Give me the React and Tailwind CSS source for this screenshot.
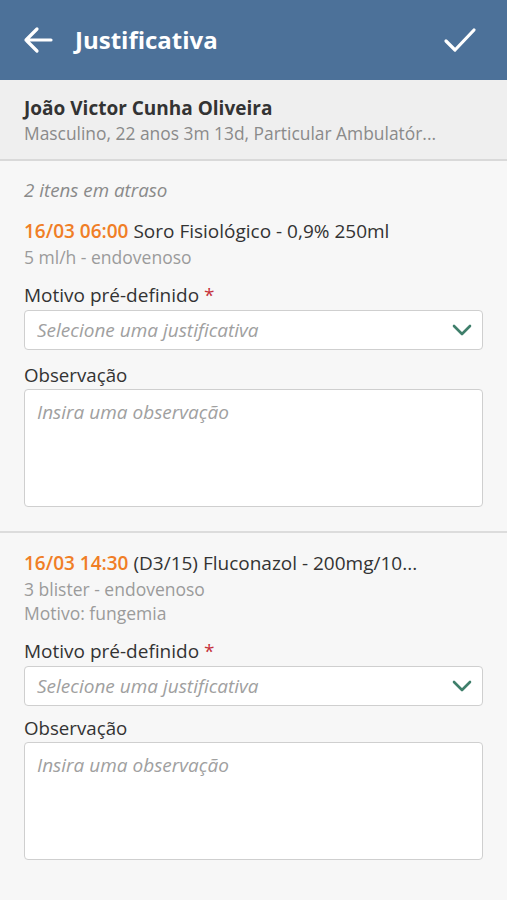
import React from "react";

function Chevron() {
  return (
    <svg width="20" height="14" viewBox="0 0 20 14" fill="none">
      <path d="M2 3 L10 11 L18 3" stroke="#3f7f6b" strokeWidth="2.6" strokeLinecap="round" strokeLinejoin="round" />
    </svg>
  );
}

function Item({ time, title, subs, first }) {
  return (
    <div className={`px-6 ${first ? "pb-6" : "pt-[18px] pb-6"}`}>
      <div className="text-[19px] leading-6 text-[#333] truncate whitespace-nowrap">
        <span className="text-[#f07e26] font-semibold">{time}</span> {title}
      </div>
      {subs.map((s, i) => (
        <div key={i} className={`text-[17.5px] leading-[22px] text-[#9b9b9b] ${i === 0 ? "mt-[3px]" : "mt-[2px]"}`}>{s}</div>
      ))}
      <div className="mt-[15px] text-[19px] leading-6 text-[#333]">
        Motivo pré-definido <span className="text-[#c6323b]">*</span>
      </div>
      <div className="mt-[3px] h-10 rounded border border-[#cfcfcf] bg-white flex items-center justify-between pl-3 pr-[10px]">
        <span className="italic text-[19px] text-[#a0a0a0]">Selecione uma justificativa</span>
        <Chevron />
      </div>
      <div className={`${first ? "mt-[13px]" : "mt-[10px]"} text-[18.7px] leading-6 text-[#333]`}>Observação</div>
      <div className="mt-[2px] h-[118px] rounded border border-[#cfcfcf] bg-white px-3 pt-[8px]">
        <span className="italic text-[19px] text-[#a0a0a0]">Insira uma observação</span>
      </div>
    </div>
  );
}

export default function App() {
  return (
    <div className="w-[507px] h-[900px] overflow-hidden bg-[#f7f7f7]" style={{ fontFamily: '"Open Sans", "Noto Sans", sans-serif' }}>
      <div className="h-20 bg-[#4c7199] flex items-center pl-[22px] pr-[30px]">
        <svg width="32" height="28" viewBox="0 0 32 28" fill="none">
          <path d="M29 14 H4 M15 3 L4 14 L15 25" stroke="white" strokeWidth="3.2" strokeLinecap="round" strokeLinejoin="round" />
        </svg>
        <div className="ml-[21px] text-[24px] font-bold text-white leading-none">Justificativa</div>
        <div className="flex-1" />
        <svg width="34" height="26" viewBox="0 0 34 26" fill="none">
          <path d="M3 14 L12 23 L31 3" stroke="white" strokeWidth="3.2" strokeLinecap="round" strokeLinejoin="round" />
        </svg>
      </div>
      <div className="h-[81px] bg-[#efefef] border-b-2 border-[#d9d9d9] px-6 pt-[15px]">
        <div className="text-[19px] leading-[26px] font-bold text-[#333]">João Victor Cunha Oliveira</div>
        <div className="text-[17.4px] leading-[22px] text-[#8a8a8a] mt-[1px] whitespace-nowrap">Masculino, 22 anos 3m 13d, Particular Ambulatór...</div>
      </div>
      <div className="px-6 pt-[17px] pb-[17px] text-[18.8px] leading-6 italic text-[#8a8a8a]">2 itens em atraso</div>
      <Item first time="16/03 06:00" title="Soro Fisiológico - 0,9% 250ml" subs={["5 ml/h - endovenoso"]} />
      <div className="h-[2px] bg-[#dcdcdc]" />
      <Item time="16/03 14:30" title="(D3/15) Fluconazol - 200mg/10..." subs={["3 blister - endovenoso", "Motivo: fungemia"]} />
    </div>
  );
}
